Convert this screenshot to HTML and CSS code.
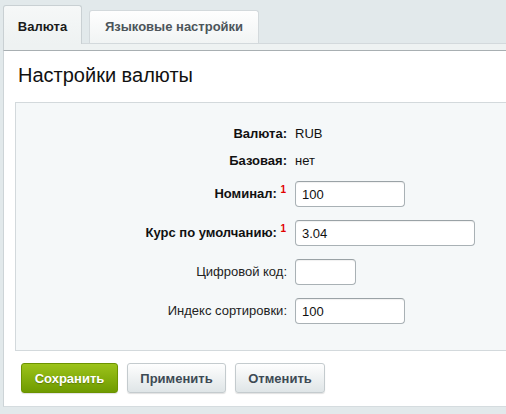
FILE: index.html
```html
<!DOCTYPE html>
<html lang="ru">
<head>
<meta charset="utf-8">
<title>Настройки валюты</title>
<link rel="stylesheet" href="styles.css">
</head>
<body>
<div class="page">
  <div class="tabs">
    <div class="tab tab-active">Валюта</div>
    <div class="tab tab-lang">Языковые настройки</div>
  </div>
  <div class="strip"></div>
  <div class="panel">
    <h1 class="title">Настройки валюты</h1>
    <div class="box">
      <div class="form">
        <div class="label strong">Валюта:</div>
        <div class="value">RUB</div>

        <div class="label strong">Базовая:</div>
        <div class="value">нет</div>

        <div class="label strong">Номинал: <sup>1</sup></div>
        <div class="value"><input class="inp w110" type="text" value="100"></div>

        <div class="label strong">Курс по умолчанию: <sup>1</sup></div>
        <div class="value"><input class="inp w180" type="text" value="3.04"></div>

        <div class="label">Цифровой код:</div>
        <div class="value"><input class="inp w61" type="text" value=""></div>

        <div class="label">Индекс сортировки:</div>
        <div class="value"><input class="inp w110" type="text" value="100"></div>
      </div>
    </div>
    <div class="buttons">
      <button class="btn btn-save">Сохранить</button>
      <button class="btn btn-apply">Применить</button>
      <button class="btn btn-cancel">Отменить</button>
    </div>
  </div>
</div>
</body>
</html>
```

FILE: styles.css
```css
html, body {
  margin: 0;
  padding: 0;
  background: #e2e9eb;
  overflow: hidden;
}
body {
  font-family: "Liberation Sans", Arial, sans-serif;
  font-size: 13px;
  color: #222;
}
.page {
  width: 560px;
  padding-left: 3px;
}
.tabs {
  display: flex;
  align-items: flex-end;
  gap: 7px;
  padding-top: 5px;
  height: 38px;
}
.tab {
  box-sizing: border-box;
  height: 33px;
  line-height: 31px;
  padding: 0 13px 0 14px;
  border: 1px solid #d3d9dc;
  border-bottom: none;
  border-radius: 3px 3px 0 0;
  background: linear-gradient(#fefefe, #f1f4f4);
  font-weight: bold;
  color: #4c555a;
}
.tab-lang {
  width: 170px;
  text-align: center;
  padding: 0;
}
.tab-active {
  position: relative;
  z-index: 1;
  height: 39px;
  margin-bottom: -1px;
  padding: 5px 0 0 0;
  width: 79px;
  text-align: center;
  border-color: #c9d0d3;
  background: linear-gradient(#f6f8f8, #eef2f2);
  color: #1a1a1a;
}
.strip {
  height: 6px;
  background: #eef2f2;
  border-top: 1px solid #d3d9dc;
  border-bottom: 1px solid #a8afb2;
  border-left: 1px solid #c9d0d3;
}
.panel {
  background: #fff;
  border-left: 1px solid #cdd4d7;
  border-bottom: 1px solid #d5dcdf;
  padding: 11px 0 13px 11px;
}
.title {
  margin: 0 0 13px 0;
  padding-left: 3px;
  font-size: 20px;
  line-height: 27px;
  font-weight: normal;
  color: #111;
}
.box {
  background: #f5f8f9;
  border: 1px solid #d3d9dc;
  padding: 24px 0 26px 0;
}
.form {
  display: grid;
  grid-template-columns: 271px auto;
  column-gap: 8px;
  row-gap: 13px;
  align-items: center;
}
.label {
  text-align: right;
  line-height: 14px;
  color: #222;
}
.label.strong {
  font-weight: bold;
  color: #111;
}
.label sup {
  color: #e10000;
  font-size: 10px;
  font-weight: bold;
  vertical-align: 5px;
  line-height: 0;
  margin-right: 1px;
}
.value {
  line-height: 14px;
  color: #111;
  display: flex;
}
.inp {
  box-sizing: border-box;
  height: 26px;
  padding: 0 6px;
  border: 1px solid #a9b1b5;
  border-top-color: #9aa2a6;
  border-radius: 4px;
  background: #fff;
  box-shadow: inset 0 1px 1px rgba(0,0,0,0.06);
  font-family: "Liberation Sans", Arial, sans-serif;
  font-size: 13px;
  color: #111;
  outline: none;
}
.w110 { width: 110px; }
.w180 { width: 180px; }
.w61 { width: 61px; }
.buttons {
  display: flex;
  gap: 9px;
  margin-top: 12px;
  padding-left: 6px;
}
.btn {
  box-sizing: border-box;
  height: 30px;
  padding: 0;
  border: 1px solid #c4cbce;
  border-radius: 3px;
  background: linear-gradient(#fefefe, #dfe5e7);
  box-shadow: 0 1px 1px rgba(0,0,0,0.12);
  font-family: "Liberation Sans", Arial, sans-serif;
  font-size: 13px;
  font-weight: bold;
  color: #3d4a54;
  text-align: center;
}
.btn-save {
  border-color: #6c9300;
  background: linear-gradient(#9cc31a, #6f9b00);
  color: #fff;
  text-shadow: 0 1px 1px rgba(0,0,0,0.25);
  width: 97px;
}
.btn-apply { width: 99px; }
.btn-cancel { width: 90px; }
```
